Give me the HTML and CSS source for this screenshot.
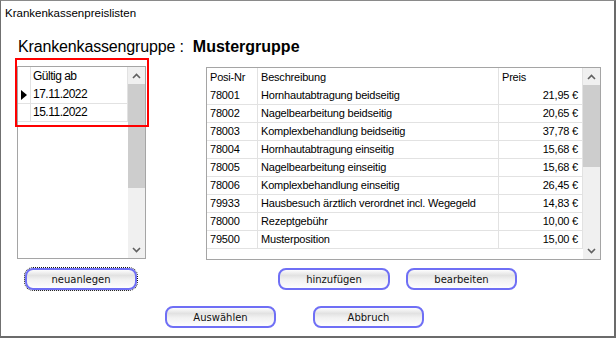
FILE: index.html
```html
<!DOCTYPE html>
<html lang="de">
<head>
  <meta charset="UTF-8">
  <title>Krankenkassenpreislisten</title>
  <link rel="stylesheet" href="styles.css">
</head>
<body>
  <div class="window">
    <div class="titlebar">Krankenkassenpreislisten</div>

    <div class="content">
      <h1 class="group-title">Krankenkassengruppe :<b>Mustergruppe</b></h1>

      <div class="grids">
        <!-- Gültigkeitsdaten -->
        <div class="grid grid-dates">
          <div class="grid-body">
            <div class="row head">
              <div class="cell rowhead"></div>
              <div class="cell col-date">Gültig ab</div>
            </div>
            <div class="row">
              <div class="cell rowhead current"><span class="pointer"></span></div>
              <div class="cell col-date">17.11.2022</div>
            </div>
            <div class="row">
              <div class="cell rowhead"></div>
              <div class="cell col-date">15.11.2022</div>
            </div>
          </div>
          <div class="vscroll">
            <div class="arrow"><svg width="9" height="6" viewBox="0 0 9 6"><polyline points="1,5 4.5,1.5 8,5" fill="none" stroke="#606060" stroke-width="1.6"/></svg></div>
            <div class="thumb thumb-dates"></div>
            <div class="track"></div>
            <div class="arrow"><svg width="9" height="6" viewBox="0 0 9 6"><polyline points="1,1 4.5,4.5 8,1" fill="none" stroke="#606060" stroke-width="1.6"/></svg></div>
          </div>
        </div>

        <!-- Preisliste -->
        <div class="grid grid-prices">
          <div class="grid-body">
            <div class="row head">
              <div class="cell col-nr">Posi-Nr</div>
              <div class="cell col-desc">Beschreibung</div>
              <div class="cell col-price head-price">Preis</div>
            </div>
            <div class="row"><div class="cell col-nr">78001</div><div class="cell col-desc">Hornhautabtragung beidseitig</div><div class="cell col-price">21,95 €</div></div>
            <div class="row"><div class="cell col-nr">78002</div><div class="cell col-desc">Nagelbearbeitung beidseitig</div><div class="cell col-price">20,65 €</div></div>
            <div class="row"><div class="cell col-nr">78003</div><div class="cell col-desc">Komplexbehandlung beidseitig</div><div class="cell col-price">37,78 €</div></div>
            <div class="row"><div class="cell col-nr">78004</div><div class="cell col-desc">Hornhautabtragung einseitig</div><div class="cell col-price">15,68 €</div></div>
            <div class="row"><div class="cell col-nr">78005</div><div class="cell col-desc">Nagelbearbeitung einseitig</div><div class="cell col-price">15,68 €</div></div>
            <div class="row"><div class="cell col-nr">78006</div><div class="cell col-desc">Komplexbehandlung einseitig</div><div class="cell col-price">26,45 €</div></div>
            <div class="row"><div class="cell col-nr">79933</div><div class="cell col-desc">Hausbesuch ärztlich verordnet incl. Wegegeld</div><div class="cell col-price">14,83 €</div></div>
            <div class="row"><div class="cell col-nr">78000</div><div class="cell col-desc">Rezeptgebühr</div><div class="cell col-price">10,00 €</div></div>
            <div class="row"><div class="cell col-nr">79500</div><div class="cell col-desc">Musterposition</div><div class="cell col-price">15,00 €</div></div>
          </div>
          <div class="vscroll">
            <div class="arrow"><svg width="9" height="6" viewBox="0 0 9 6"><polyline points="1,5 4.5,1.5 8,5" fill="none" stroke="#606060" stroke-width="1.6"/></svg></div>
            <div class="thumb thumb-prices"></div>
            <div class="track"></div>
            <div class="arrow"><svg width="9" height="6" viewBox="0 0 9 6"><polyline points="1,1 4.5,4.5 8,1" fill="none" stroke="#606060" stroke-width="1.6"/></svg></div>
          </div>
        </div>
      </div>

      <!-- Bearbeiten -->
      <div class="button-row row-edit">
        <button class="btn btn-new focused">neuanlegen</button>
        <button class="btn btn-add">hinzufügen</button>
        <button class="btn btn-edit">bearbeiten</button>
      </div>

      <!-- Dialog -->
      <div class="button-row row-main">
        <button class="btn btn-select">Auswählen</button>
        <button class="btn btn-cancel">Abbruch</button>
      </div>
    </div>

    <div class="marker"></div>
  </div>
</body>
</html>
```

FILE: styles.css
```css
body {
  margin: 0;
  background-color: white;
  font-family: "Liberation Sans", Arial, sans-serif;
}

.window {
  position: relative;
  width: 616px;
  height: 338px;
  box-sizing: border-box;
  background-color: white;
  border-top: 1px solid #8a8a8a;
  border-left: 1px solid #707070;
  border-right: 2px solid #6b6b6b;
  border-bottom: 2px solid #6b6b6b;
}

.titlebar {
  height: 25px;
  line-height: 25px;
  padding-left: 4px;
  font-size: 11.5px;
  color: #000;
}

.content {
  padding-left: 16px;
}

.group-title {
  margin: 11px 0 0 1px;
  font-size: 16px;
  line-height: 20px;
  font-weight: normal;
  letter-spacing: -0.15px;
  color: #000;
}

.group-title b {
  margin-left: 9px;
  letter-spacing: 0;
}

/* Tabellen */
.grids {
  display: flex;
  align-items: flex-start;
  margin-top: 9px;
}

.grid {
  display: flex;
  height: 193px;
  box-sizing: border-box;
  border: 1px solid #a5a5a5;
  background-color: white;
}

.grid-dates {
  width: 129px;
  font-size: 12px;
  letter-spacing: -0.5px;
}

.grid-prices {
  width: 395px;
  margin-left: 60px;
  margin-top: 1px;
  font-size: 11px;
  letter-spacing: -0.2px;
}

.grid-body {
  flex: 1;
}

.row {
  display: flex;
  height: 18px;
  box-sizing: border-box;
  border-bottom: 1px solid #e2e2e2;
  line-height: 17px;
}

.row.head {
  height: 19px;
  line-height: 19px;
  border-bottom: none;
}

.cell {
  box-sizing: border-box;
  border-right: 1px solid #e2e2e2;
  white-space: nowrap;
  overflow: hidden;
  padding-left: 3px;
}

.rowhead {
  width: 13px;
  padding: 0;
  display: flex;
  align-items: center;
}

.pointer {
  margin-left: 3px;
  border-left: 6px solid #000;
  border-top: 5px solid transparent;
  border-bottom: 5px solid transparent;
}

.col-date {
  width: 97px;
  padding-left: 2px;
}

.col-nr {
  width: 51px;
}

.col-desc {
  width: 241px;
}

.col-price {
  width: 84px;
  text-align: right;
  padding-right: 4px;
}

.head-price {
  text-align: left;
  padding-left: 3px;
}

/* Bildlaufleiste */
.vscroll {
  width: 17px;
  display: flex;
  flex-direction: column;
  background-color: #f0f0f0;
}

.arrow {
  height: 17px;
  display: flex;
  align-items: center;
  justify-content: center;
}

.thumb {
  background-color: #cdcdcd;
}

.thumb-dates {
  height: 104px;
}

.thumb-prices {
  height: 82px;
}

.track {
  flex: 1;
}

/* Schaltflächen */
.button-row {
  display: flex;
}

.row-edit {
  margin-top: 8px;
}

.row-main {
  margin-top: 16px;
}

.btn {
  width: 111px;
  height: 22px;
  box-sizing: border-box;
  padding: 0;
  border: 2px solid #6f6ff5;
  border-radius: 8px;
  background: linear-gradient(to bottom, #fdfdfd 0%, #e2e2e2 30%, #f2f2f2 55%, #fefefe 100%);
  font-family: "DejaVu Sans", Verdana, sans-serif;
  font-size: 10px;
  color: #111;
  cursor: pointer;
}

.btn.focused {
  outline: 1px dotted #111;
  outline-offset: 0;
}

.btn-new {
  width: 112px;
  margin-left: 8px;
}

.btn-add {
  width: 112px;
  margin-left: 141px;
}

.btn-edit {
  margin-left: 16px;
}

.btn-select {
  margin-left: 148px;
}

.btn-cancel {
  margin-left: 37px;
}

/* Markierung */
.marker {
  position: absolute;
  left: 14px;
  top: 57px;
  width: 134px;
  height: 69px;
  box-sizing: border-box;
  border: 2px solid #f00;
}
```
